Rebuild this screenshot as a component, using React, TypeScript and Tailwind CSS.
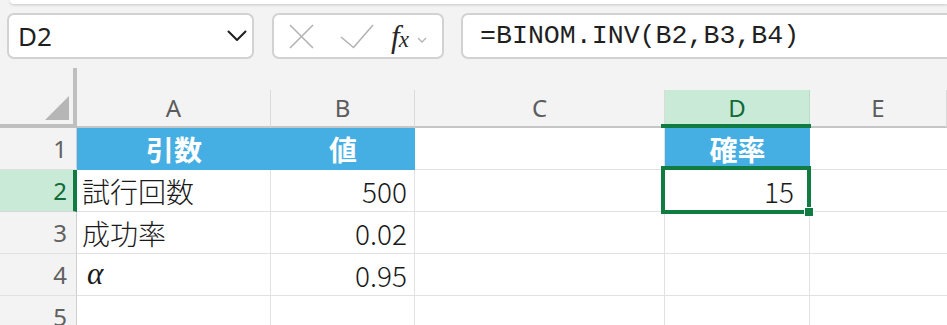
import React from 'react';

const LINE = 'border-[#e1e1e1]';

function RowHead({ n, active }: { n: number; active?: boolean }) {
  return (
    <div
      className={
        active
          ? 'w-[77px] h-full flex items-center justify-end pr-[6px] bg-[#caead8] border-r-4 border-r-[#107c41] border-b border-b-[#d6d6d6] text-[#0f6b37]'
          : 'w-[77px] h-full flex items-center justify-end pr-[9px] bg-[#f3f3f3] border-r border-r-[#cfcfcf] border-b border-b-[#e1e1e1] text-[#616161]'
      }
    >
      <span className="text-[24px] font-['Noto_Sans',sans-serif] leading-none">{n}</span>
    </div>
  );
}

function ColHead({ label, w, active }: { label: string; w: string; active?: boolean }) {
  return (
    <div className={`${w} h-[60px] flex flex-col justify-end shrink-0`}>
      <div
        className={
          active
            ? 'h-[38px] flex items-center justify-center bg-[#caead8] border-r border-r-[#b9dcc6] border-b-2 border-b-[#c6c6c6] text-[#0f6b37]'
            : 'h-[38px] flex items-center justify-center border-r border-r-[#dadada] border-b-2 border-b-[#c6c6c6] text-[#5c5c5c]'
        }
      >
        <span className="text-[24px] font-['Noto_Sans',sans-serif] leading-none">{label}</span>
      </div>
    </div>
  );
}

const CJK = "font-['Noto_Sans_CJK_JP','Noto_Sans',sans-serif]";

export default function App() {
  const dataRows: { n: number; a: React.ReactNode; b: string }[] = [
    { n: 2, a: '試行回数', b: '500' },
    { n: 3, a: '成功率', b: '0.02' },
    { n: 4, a: <span className="pl-[5px] italic font-['Liberation_Serif',serif] text-[31px]">α</span>, b: '0.95' },
    { n: 5, a: '', b: '' },
  ];

  return (
    <div className="w-[947px] h-[325px] overflow-hidden bg-[#f3f3f3] font-['Noto_Sans',sans-serif]">
      <div className="h-[4px] ml-[10px] bg-white rounded-bl-[10px] shadow-[0_1px_3px_rgba(0,0,0,0.18)]" />

      {/* formula bar */}
      <div className="mt-[9px] flex h-[46px] pl-[7px]">
        <div className="w-[247px] shrink-0 h-full rounded-[7px] border-2 border-[#d2d2d2] bg-white flex items-center justify-between pl-[9px] pr-[5px]">
          <span className="text-[26px] leading-none text-[#1f1f1f]">D2</span>
          <svg width="20" height="12" viewBox="0 0 20 12" fill="none">
            <path d="M1.5 1.5 L10 10 L18.5 1.5" stroke="#1f1f1f" strokeWidth="2" strokeLinecap="round" strokeLinejoin="round" />
          </svg>
        </div>

        <div className="ml-[18px] w-[172px] shrink-0 h-full rounded-[7px] border-2 border-[#d2d2d2] bg-white flex items-center pl-[15px]">
          <svg width="25" height="25" viewBox="0 0 25 25" fill="none">
            <path d="M1 1 L24 24 M24 1 L1 24" stroke="#b3b3b3" strokeWidth="1.6" />
          </svg>
          <svg className="ml-[26px]" width="34" height="25" viewBox="0 0 34 25" fill="none">
            <path d="M1 13 L13.5 23.5 L33 1" stroke="#b3b3b3" strokeWidth="1.6" />
          </svg>
          <div className="ml-[17px] flex items-baseline text-[#262626] font-['Liberation_Serif',serif] italic leading-none">
            <span className="text-[31px]">f</span>
            <span className="text-[23px] -ml-[1px]">x</span>
          </div>
          <svg className="ml-[8px] mt-[8px]" width="10" height="6" viewBox="0 0 10 6" fill="none">
            <path d="M1 1 L5 5 L9 1" stroke="#b3b3b3" strokeWidth="1.3" />
          </svg>
        </div>

        <div className="ml-[17px] flex-1 -mr-[20px] h-full rounded-[7px] border-2 border-[#d2d2d2] bg-white flex items-center pl-[17px]">
          <span className="text-[26.6px] leading-none text-[#1f1f1f] font-['Liberation_Mono',monospace]">=BINOM.INV(B2,B3,B4)</span>
        </div>
      </div>

      {/* grid */}
      <div className="mt-[9px] relative">
        <div className="flex h-[60px]">
          <div className="w-[77px] h-[60px] shrink-0 border-r-4 border-b-4 border-[#bfbfbf] flex items-end justify-end p-[4px]">
            <svg width="24" height="24" viewBox="0 0 24 24">
              <path d="M24 0 L24 24 L0 24 Z" fill="#b6b6b6" />
            </svg>
          </div>
          <ColHead label="A" w="w-[194px]" />
          <ColHead label="B" w="w-[144px]" />
          <ColHead label="C" w="w-[250px]" />
          <ColHead label="D" w="w-[145px]" active />
          <ColHead label="E" w="flex-1" />
        </div>

        {/* row 1 */}
        <div className="flex h-[42px]">
          <RowHead n={1} />
          <div className={`w-[338px] shrink-0 flex bg-[#45aee2] text-white font-bold text-[28px] ${CJK} border-b border-b-[#45aee2]`}>
            <div className="w-[194px] flex items-center justify-center">引数</div>
            <div className="w-[144px] flex items-center justify-center">値</div>
          </div>
          <div className={`w-[250px] shrink-0 border-r border-b bg-white ${LINE}`} />
          <div className={`w-[145px] shrink-0 flex items-center justify-center bg-[#45aee2] text-white font-bold text-[28px] ${CJK}`}>
            確率
          </div>
          <div className={`flex-1 border-b bg-white ${LINE}`} />
        </div>

        {dataRows.map((r) => (
          <div key={r.n} className="flex h-[42px]">
            <RowHead n={r.n} active={r.n === 2} />
            <div className={`w-[194px] shrink-0 flex items-center pl-[5px] border-r border-b bg-white text-[#1a1a1a] text-[28px] font-light ${CJK} ${LINE}`}>
              {r.a}
            </div>
            <div className={`w-[144px] shrink-0 flex items-center justify-end pr-[7px] border-r border-b bg-white text-[#1a1a1a] text-[28px] font-light ${CJK} ${LINE}`}>
              {r.b}
            </div>
            <div className={`w-[250px] shrink-0 border-r border-b bg-white ${LINE}`} />
            <div className={`w-[145px] shrink-0 flex items-center justify-end pr-[15px] border-r border-b bg-white text-[#1a1a1a] text-[28px] font-light ${CJK} ${LINE}`}>
              {r.n === 2 ? '15' : ''}
            </div>
            <div className={`flex-1 border-b bg-white ${LINE}`} />
          </div>
        ))}

        {/* selection overlay */}
        <div className="absolute left-[661px] top-[56px] w-[150px] h-[4px] bg-[#107c41]" />
        <div className="absolute left-[661px] top-[98px] w-[150px] h-[48px] border-4 border-[#107c41]" />
        <div className="absolute left-[804px] top-[139px] w-[10px] h-[10px] bg-[#107c41] border border-white" />
      </div>
    </div>
  );
}
